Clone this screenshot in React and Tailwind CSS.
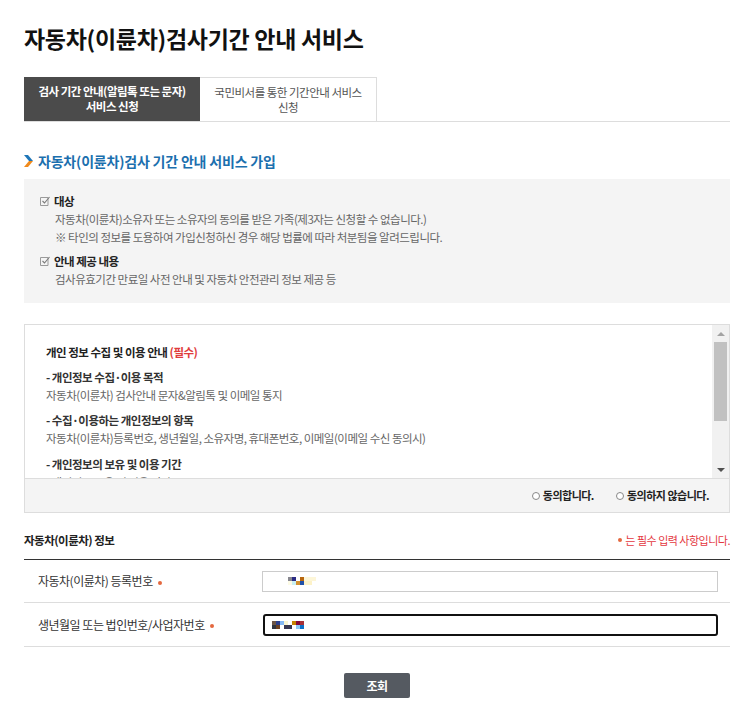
import React from "react";

const maskA = [
  ["#ffffff", "#888890", "#2c2c84", "#ffffff", "#b8660e", "#fdf6d8", "#fdf6d8", "#fdf6d8"],
  ["#ffffff", "#fdfbe6", "#c8f0f4", "#d39030", "#2050a8", "#fdf2c8", "#fdf2c8", "#ffffff"],
];

const maskB = [
  ["#6b5444", "#2a3f8c", "#84b8f4", "#f8f4d0", "#ffffff", "#c88400", "#880a38", "#a83238"],
  ["#2e3440", "#6c4020", "#ffffff", "#363650", "#363650", "#ffffff", "#8cc8f4", "#0c70c8"],
];

const Mask = ({ rows }) => (
  <div className="flex flex-col">
    {rows.map((row, i) => (
      <div key={i} className="flex">
        {row.map((c, j) => (
          <span key={j} className="w-[4px] h-[4px]" style={{ backgroundColor: c }} />
        ))}
      </div>
    ))}
  </div>
);

const CheckIcon = () => (
  <svg width="10" height="10" viewBox="0 0 10 10" className="shrink-0">
    <path d="M0.5 1.5h7.5v8h-7.5z" fill="none" stroke="#9a9a9a" strokeWidth="1" />
    <path d="M2.5 5l2 2 5-6" fill="none" stroke="#7a7a7a" strokeWidth="1.1" />
  </svg>
);

const Dot = () => (
  <span className="inline-block w-[4px] h-[4px] rounded-full bg-[#e4683f] ml-[5px] align-middle" />
);

const App = () => {
  return (
    <div className="w-[741px] min-h-[712px] bg-white font-['Noto_Sans_CJK_KR','Noto_Sans',sans-serif] tracking-[-0.5px]">
      <div className="ml-6 w-[706px] pt-[20px]">
        {/* Title */}
        <h1 className="text-[23px] leading-[36px] font-bold text-[#111] tracking-[-0.3px]">
          자동차(이륜차)검사기간 안내 서비스
        </h1>

        {/* Tabs */}
        <div className="mt-[21px] flex border-b border-[#dddddd]">
          <div className="w-[176px] h-[44px] bg-[#4b4b4b] flex items-center justify-center text-center text-white text-[11.5px] leading-[15px] font-bold">
            검사 기간 안내(알림톡 또는 문자)
            <br />
            서비스 신청
          </div>
          <div className="w-[177px] h-[44px] border border-b-0 border-l-0 border-[#dddddd] flex items-center justify-center text-center text-[#555] text-[11.5px] leading-[15px]">
            국민비서를 통한 기간안내 서비스
            <br />
            신청
          </div>
        </div>

        {/* Section heading */}
        <div className="mt-[29px] flex items-center gap-[5px]">
          <svg width="9" height="12" viewBox="0 0 9 12">
            <path d="M0 0h4l5 6H5z" fill="#1f76b8" />
            <path d="M0 12h4l5-6H5z" fill="#f08a1c" />
          </svg>
          <h2 className="text-[14px] leading-[20px] font-bold text-[#1b6fae] tracking-[-0.2px]">
            자동차(이륜차)검사 기간 안내 서비스 가입
          </h2>
        </div>

        {/* Info box */}
        <div className="mt-[8px] bg-[#f4f4f4] h-[124px] pl-4 pt-[13px] text-[11.5px] leading-[18px]">
          <div className="flex items-center gap-[4px] font-bold text-[#222]">
            <CheckIcon />
            대상
          </div>
          <div className="pl-[15px] text-[#666]">
            <p>자동차(이륜차)소유자 또는 소유자의 동의를 받은 가족(제3자는 신청할 수 없습니다.)</p>
            <p>※ 타인의 정보를 도용하여 가입신청하신 경우 해당 법률에 따라 처분됨을 알려드립니다.</p>
          </div>
          <div className="mt-[6px] flex items-center gap-[4px] font-bold text-[#222]">
            <CheckIcon />
            안내 제공 내용
          </div>
          <div className="pl-[15px] text-[#666]">
            <p>검사유효기간 만료일 사전 안내 및 자동차 안전관리 정보 제공 등</p>
          </div>
        </div>

        {/* Agreement box */}
        <div className="mt-[21px] border border-[#dddddd]">
          <div className="flex h-[153px]">
            <div className="flex-1 overflow-hidden pl-[21px] pt-[18px] text-[11.5px] leading-[18px]">
              <p className="font-bold text-[#222]">
                개인 정보 수집 및 이용 안내 <span className="text-[#e03c3c]">(필수)</span>
              </p>
              <p className="mt-[7px] font-bold text-[#333]">- 개인정보 수집·이용 목적</p>
              <p className="text-[#666]">자동차(이륜차) 검사안내 문자&amp;알림톡 및 이메일 통지</p>
              <p className="mt-[7px] font-bold text-[#333]">- 수집·이용하는 개인정보의 항목</p>
              <p className="text-[#666]">
                자동차(이륜차)등록번호, 생년월일, 소유자명, 휴대폰번호, 이메일(이메일 수신 동의시)
              </p>
              <p className="mt-[8px] font-bold text-[#333]">- 개인정보의 보유 및 이용 기간</p>
              <p className="text-[#666]">- 개인정보 보유 및 이용 기간</p>
            </div>
            {/* scrollbar */}
            <div className="w-[17px] bg-[#f1f1f1] flex flex-col items-center">
              <div className="h-[17px] flex items-center justify-center">
                <span className="w-0 h-0 border-l-[4px] border-r-[4px] border-b-[4px] border-l-transparent border-r-transparent border-b-[#a3a3a3]" />
              </div>
              <div className="w-[13px] h-[79px] bg-[#c1c1c1]" />
              <div className="flex-1" />
              <div className="h-[17px] flex items-center justify-center">
                <span className="w-0 h-0 border-l-[4px] border-r-[4px] border-t-[4px] border-l-transparent border-r-transparent border-t-[#505050]" />
              </div>
            </div>
          </div>
          <div className="h-[34px] border-t border-[#dddddd] bg-[#f4f4f4] flex items-center justify-end pr-[20px] gap-[22px] text-[11px] text-[#222] font-bold">
            <label className="flex items-center gap-[3px]">
              <span className="w-[8px] h-[8px] rounded-full border border-[#888] bg-white" />
              동의합니다.
            </label>
            <label className="flex items-center gap-[3px]">
              <span className="w-[8px] h-[8px] rounded-full border border-[#888] bg-white" />
              동의하지 않습니다.
            </label>
          </div>
        </div>

        {/* Vehicle info */}
        <div className="mt-[18px] flex items-end justify-between pb-[10px] border-b border-[#333]">
          <h3 className="text-[11.5px] leading-[18px] font-bold text-[#222]">자동차(이륜차) 정보</h3>
          <p className="text-[11px] leading-[18px] text-[#e4383f] flex items-center">
            <span className="inline-block w-[4px] h-[4px] rounded-full bg-[#e4683f] mr-[3px]" />
            는 필수 입력 사항입니다.
          </p>
        </div>

        <div className="flex items-center h-[43px] border-b border-[#dddddd]">
          <div className="w-[238px] pl-[14px] text-[12px] text-[#333]">
            자동차(이륜차) 등록번호
            <Dot />
          </div>
          <div className="w-[456px] h-[21px] border border-[#cccccc] flex items-center pl-[21px]">
            <Mask rows={maskA} />
          </div>
        </div>

        <div className="flex items-center h-[44px] border-b border-[#dddddd]">
          <div className="w-[239px] pl-[14px] text-[12px] text-[#333]">
            생년월일 또는 법인번호/사업자번호
            <Dot />
          </div>
          <div className="w-[455px] h-[22px] border-2 border-[#111] rounded-[3px] flex items-center pl-[7px]">
            <Mask rows={maskB} />
          </div>
        </div>

        <div className="mt-[26px] flex justify-center">
          <button className="w-[66px] h-[25px] bg-[#555a61] rounded-[2px] text-white text-[12px] font-bold">
            조회
          </button>
        </div>
      </div>
    </div>
  );
};

export default App;
